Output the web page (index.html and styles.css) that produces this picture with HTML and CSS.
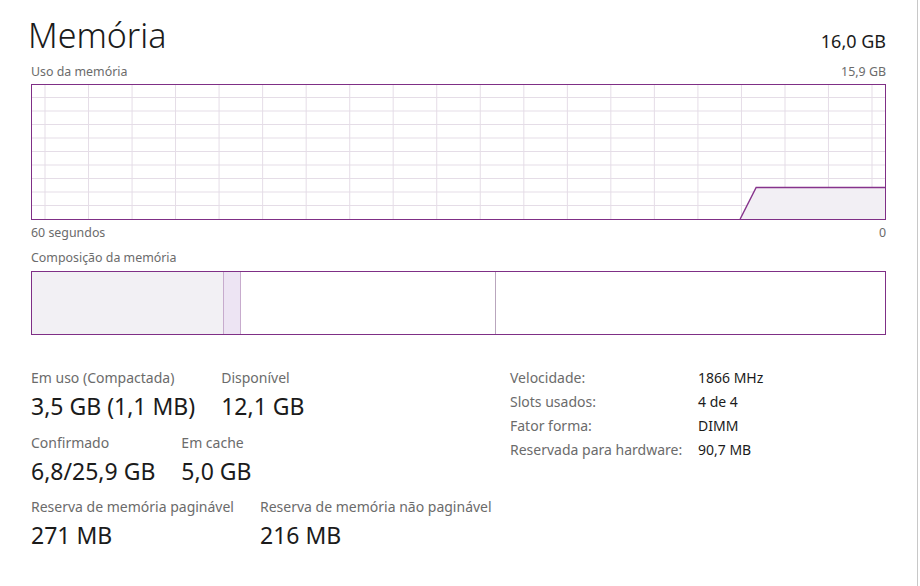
FILE: index.html
```html
<!DOCTYPE html>
<html lang="pt">
<head>
<meta charset="utf-8">
<title>Memória</title>
<link rel="stylesheet" href="styles.css">
</head>
<body>
<div class="edge"></div>
<main class="page">
  <header class="head">
    <h1 class="title">Memória</h1>
    <div class="total">16,0 GB</div>
  </header>
  <div class="caption-row top">
    <span>Uso da memória</span>
    <span>15,9 GB</span>
  </div>
  <div class="graph">
    <svg class="graph-svg" viewBox="0 0 854 134" preserveAspectRatio="none">
      <g class="grid">
        <line x1="13" y1="0" x2="13" y2="134"/>
        <line x1="56.6" y1="0" x2="56.6" y2="134"/>
        <line x1="100.2" y1="0" x2="100.2" y2="134"/>
        <line x1="143.7" y1="0" x2="143.7" y2="134"/>
        <line x1="187.3" y1="0" x2="187.3" y2="134"/>
        <line x1="230.9" y1="0" x2="230.9" y2="134"/>
        <line x1="274.5" y1="0" x2="274.5" y2="134"/>
        <line x1="318.1" y1="0" x2="318.1" y2="134"/>
        <line x1="361.6" y1="0" x2="361.6" y2="134"/>
        <line x1="405.2" y1="0" x2="405.2" y2="134"/>
        <line x1="448.8" y1="0" x2="448.8" y2="134"/>
        <line x1="492.4" y1="0" x2="492.4" y2="134"/>
        <line x1="536" y1="0" x2="536" y2="134"/>
        <line x1="579.5" y1="0" x2="579.5" y2="134"/>
        <line x1="623.1" y1="0" x2="623.1" y2="134"/>
        <line x1="666.7" y1="0" x2="666.7" y2="134"/>
        <line x1="710.3" y1="0" x2="710.3" y2="134"/>
        <line x1="753.9" y1="0" x2="753.9" y2="134"/>
        <line x1="797.4" y1="0" x2="797.4" y2="134"/>
        <line x1="841" y1="0" x2="841" y2="134"/>
        <line x1="0" y1="12.5" x2="854" y2="12.5"/>
        <line x1="0" y1="26" x2="854" y2="26"/>
        <line x1="0" y1="39.5" x2="854" y2="39.5"/>
        <line x1="0" y1="53" x2="854" y2="53"/>
        <line x1="0" y1="66.5" x2="854" y2="66.5"/>
        <line x1="0" y1="80" x2="854" y2="80"/>
        <line x1="0" y1="93.5" x2="854" y2="93.5"/>
        <line x1="0" y1="107" x2="854" y2="107"/>
        <line x1="0" y1="120.5" x2="854" y2="120.5"/>
      </g>
      <polygon class="area" points="709,134 725,102.5 854,102.5 854,134"/>
      <polyline class="usage" points="709,134 725,102.5 854,102.5"/>
    </svg>
  </div>
  <div class="caption-row axis">
    <span>60 segundos</span>
    <span>0</span>
  </div>
  <div class="caption-row comp-caption">
    <span>Composição da memória</span>
  </div>
  <div class="comp">
    <div class="seg inuse"></div>
    <div class="seg modified"></div>
    <div class="seg standby"></div>
    <div class="seg free"></div>
  </div>

  <section class="stats">
    <div class="left">
      <div class="stat-row">
        <div class="stat"><div class="label">Em uso (Compactada)</div><div class="value">3,5 GB (1,1 MB)</div></div>
        <div class="stat"><div class="label">Disponível</div><div class="value">12,1 GB</div></div>
      </div>
      <div class="stat-row">
        <div class="stat"><div class="label">Confirmado</div><div class="value">6,8/25,9 GB</div></div>
        <div class="stat"><div class="label">Em cache</div><div class="value">5,0 GB</div></div>
      </div>
      <div class="stat-row">
        <div class="stat"><div class="label">Reserva de memória paginável</div><div class="value">271 MB</div></div>
        <div class="stat"><div class="label">Reserva de memória não paginável</div><div class="value">216 MB</div></div>
      </div>
    </div>
    <dl class="props">
      <dt>Velocidade:</dt><dd>1866 MHz</dd>
      <dt>Slots usados:</dt><dd>4 de 4</dd>
      <dt>Fator forma:</dt><dd>DIMM</dd>
      <dt>Reservada para hardware:</dt><dd>90,7 MB</dd>
    </dl>
  </section>
</main>
</body>
</html>
```

FILE: styles.css
```css
* { box-sizing: border-box; }
html, body { margin: 0; padding: 0; background: #ffffff; }
body {
  font-family: "Noto Sans", "Open Sans", sans-serif;
  color: #1b1b1b;
  width: 920px;
  height: 586px;
  overflow: hidden;
  position: relative;
}
.edge {
  position: absolute;
  top: 0;
  right: 2px;
  width: 1px;
  height: 586px;
  background: #c8c8c8;
}
.page {
  padding: 0 34px 0 31px;
}
.head {
  display: flex;
  justify-content: space-between;
  align-items: baseline;
  height: 64px;
}
.title {
  margin: 0;
  margin-left: -3px;
  font-weight: 300;
  font-size: 34px;
  line-height: 1;
  padding-top: 18px;
}
.total {
  font-size: 18px;
  line-height: 1;
}
.caption-row {
  display: flex;
  justify-content: space-between;
  font-size: 12.4px;
  color: #6b6b6b;
  line-height: 16px;
}
.caption-row.top { margin-top: 0; height: 20px; }
.caption-row.axis { margin-top: 5px; height: 17px; }
.caption-row.comp-caption { height: 29px; padding-top: 8px; }
.graph {
  border: 1px solid #7f2f86;
  height: 136px;
}
.graph-svg {
  display: block;
  width: 100%;
  height: 134px;
}
.grid line {
  stroke: #e5dde7;
  stroke-width: 1;
}
.area { fill: #f2eff4; }
.usage {
  fill: none;
  stroke: #86338c;
  stroke-width: 1.4;
}
.comp {
  border: 1px solid #7f2f86;
  height: 64px;
  display: flex;
}
.seg { height: 100%; }
.inuse { width: 191px; background: #f2f0f4; }
.modified {
  width: 18px;
  background: #ede4f3;
  border-left: 1px solid #c7abcd;
  border-right: 1px solid #c7abcd;
}
.standby {
  width: 255px;
  border-right: 1px solid #b9a6bd;
}
.free { flex: 1; }

.stats {
  display: flex;
  margin-top: 33px;
}
.left {
  width: 479px;
  display: flex;
  flex-direction: column;
  gap: 8.5px;
}
.stat-row {
  display: flex;
  gap: 26px;
}
.label {
  font-size: 14px;
  line-height: 20px;
  color: #6b6b6b;
}
.value {
  font-size: 23px;
  line-height: 36px;
  color: #1b1b1b;
}
.props {
  margin: 0;
  display: grid;
  grid-template-columns: 188px auto;
  grid-auto-rows: 24px;
  align-content: start;
  font-size: 14px;
  line-height: 20px;
}
.props dt { color: #6b6b6b; }
.props dd { margin: 0; color: #1b1b1b; }
```
